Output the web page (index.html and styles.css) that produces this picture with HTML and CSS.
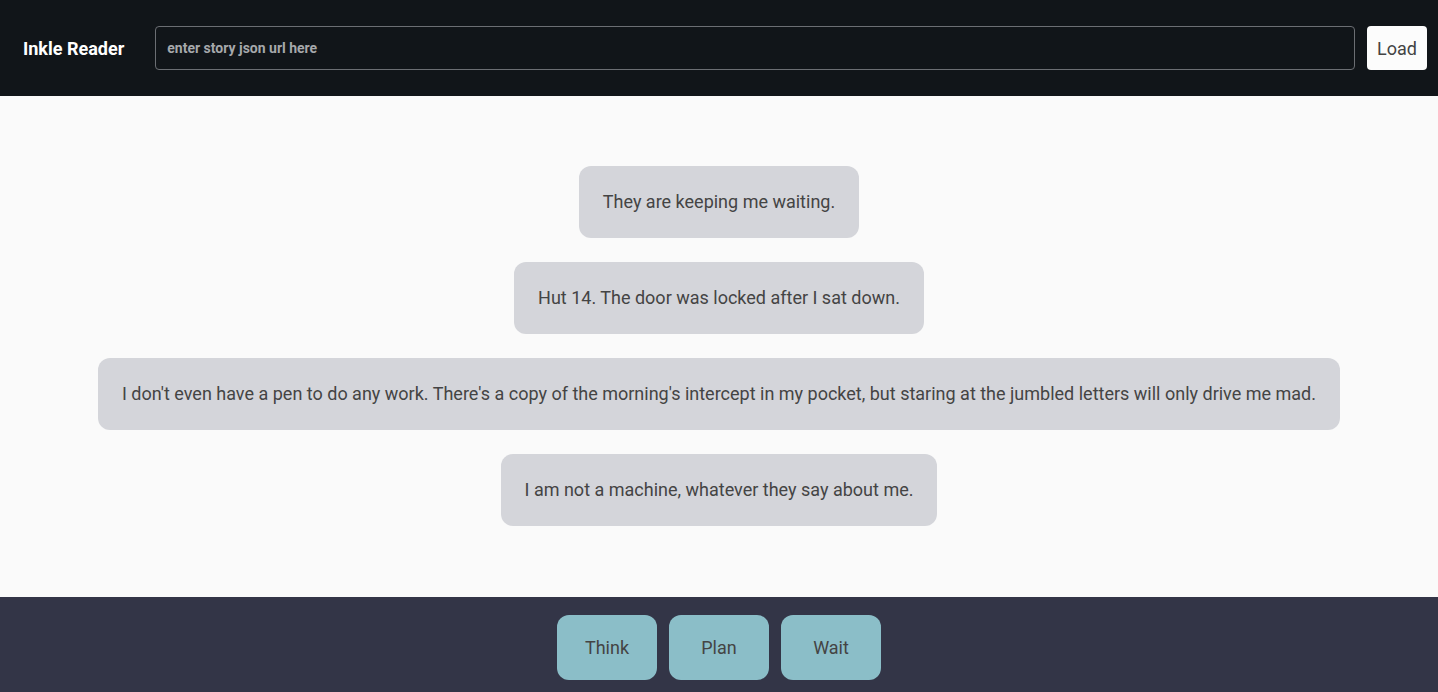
FILE: index.html
```html
<!DOCTYPE html>
<html lang="en">
<head>
<meta charset="utf-8">
<title>Inkle Reader</title>
<link rel="stylesheet" href="styles.css">
</head>
<body>
<header class="topbar">
  <div class="brand">Inkle Reader</div>
  <input class="url-input" type="text" placeholder="enter story json url here">
  <button class="load-btn">Load</button>
</header>
<main class="story">
  <div class="bubble">They are keeping me waiting.</div>
  <div class="bubble">Hut 14. The door was locked after I sat down.</div>
  <div class="bubble">I don't even have a pen to do any work. There's a copy of the morning's intercept in my pocket, but staring at the jumbled letters will only drive me mad.</div>
  <div class="bubble">I am not a machine, whatever they say about me.</div>
</main>
<footer class="choices">
  <button class="choice">Think</button>
  <button class="choice">Plan</button>
  <button class="choice">Wait</button>
</footer>
</body>
</html>
```
FILE: styles.css
```css
* { box-sizing: border-box; }
html, body { margin: 0; padding: 0; }
body {
  font-family: Roboto, "Liberation Sans", sans-serif;
  background: #fafafa;
  height: 692px;
  display: flex;
  flex-direction: column;
}
.topbar {
  height: 96px;
  background: #111519;
  display: flex;
  align-items: center;
  padding: 0 11px 0 23px;
  gap: 12px;
}
.brand {
  color: #fff;
  font-weight: 700;
  font-size: 18px;
  margin-right: 19px;
  white-space: nowrap;
}
.url-input {
  flex: 1;
  height: 44px;
  background: #111519;
  border: 1px solid #6b6e73;
  border-radius: 4px;
  padding: 0 11px;
  color: #ddd;
  font-family: Roboto, "Liberation Sans", sans-serif;
  font-weight: 700;
  font-size: 14px;
  outline: none;
}
.url-input::placeholder { color: #a6a8ab; }
.load-btn {
  width: 60px;
  height: 44px;
  background: #fcfcfc;
  border: none;
  border-radius: 4px;
  color: #444;
  font-family: Roboto, "Liberation Sans", sans-serif;
  font-size: 18px;
  padding: 0;
}
.story {
  flex: 1;
  display: flex;
  flex-direction: column;
  align-items: center;
  justify-content: center;
  gap: 24px;
  padding: 0 98px 2px;
}
.bubble {
  background: #d4d5da;
  border-radius: 12px;
  height: 72px;
  display: flex;
  align-items: center;
  padding: 0 24px;
  color: #444;
  font-size: 18px;
}
.choices {
  height: 95px;
  background: #333547;
  display: flex;
  justify-content: center;
  align-items: flex-start;
  padding-top: 18px;
  gap: 12px;
}
.choice {
  width: 100px;
  height: 65px;
  background: #8bbec8;
  border: none;
  border-radius: 12px;
  color: #444;
  font-family: Roboto, "Liberation Sans", sans-serif;
  font-size: 18px;
}
```
